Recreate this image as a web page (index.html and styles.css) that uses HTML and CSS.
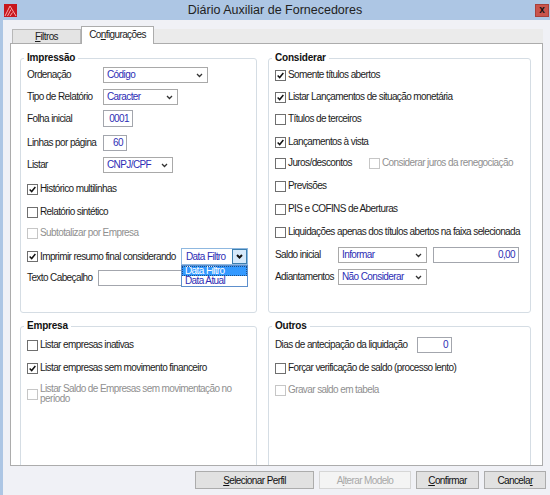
FILE: index.html
```html
<!DOCTYPE html>
<html lang="pt">
<head>
    <meta charset="utf-8">
    <title>Diário Auxiliar de Fornecedores</title>
    <link rel="stylesheet" href="styles.css">
</head>
<body>
<div class="window">
    <div class="titlebar">
        <svg class="app-icon" width="13" height="13" viewBox="0 0 13 13">
            <rect width="13" height="13" fill="#c8161d"/>
            <path d="M1 12 6 2 12 12M3.5 12 7 5.5M6 12 8.5 8.5" stroke="#f7a8a8" stroke-width="1" fill="none"/>
        </svg>
        <span class="title">Diário Auxiliar de Fornecedores</span>
        <span class="close">x</span>
    </div>

    <div class="client">
        <div class="tabs">
            <div class="tab"><u>F</u>iltros</div>
            <div class="tab active">Co<u>n</u>figurações</div>
        </div>

        <div class="page">
            <!-- Impressão -->
            <fieldset class="group">
                <legend>Impressão</legend>
                <div class="row">
                    <span class="lbl">Ordenação</span>
                    <div class="combo w105">Código<svg class="chev" viewBox="0 0 7 5"><path d="M1 1l2.5 2.5L6 1"/></svg></div>
                </div>
                <div class="row mt6">
                    <span class="lbl">Tipo de Relatório</span>
                    <div class="combo w75">Caracter<svg class="chev" viewBox="0 0 7 5"><path d="M1 1l2.5 2.5L6 1"/></svg></div>
                </div>
                <div class="row mt5 tall">
                    <span class="lbl">Folha inicial</span>
                    <span class="field w30">0001</span>
                </div>
                <div class="row mt8">
                    <span class="lbl">Linhas por página</span>
                    <span class="field w24">60</span>
                </div>
                <div class="row mt6">
                    <span class="lbl">Listar</span>
                    <div class="combo w70">CNPJ/CPF<svg class="chev" viewBox="0 0 7 5"><path d="M1 1l2.5 2.5L6 1"/></svg></div>
                </div>
                <div class="row mt8"><span class="cb"><svg viewBox="0 0 11 11"><path d="M2 5.5 4.5 8 9 2.5"/></svg></span>Histórico multilinhas</div>
                <div class="row mt7"><span class="cb"></span>Relatório sintético</div>
                <div class="row mt5 off"><span class="cb"></span>Subtotalizar por Empresa</div>
                <div class="row mt7 tall">
                    <span class="cb"><svg viewBox="0 0 11 11"><path d="M2 5.5 4.5 8 9 2.5"/></svg></span>Imprimir resumo final considerando
                    <div class="combo focus push">
                        <span class="combo-text">Data Filtro</span>
                        <span class="drop-btn"><svg class="chev bold" viewBox="0 0 7 5"><path d="M1 1l2.5 2.5L6 1"/></svg></span>
                        <div class="droplist">
                            <div class="item sel">Data Filtro</div>
                            <div class="item">Data Atual</div>
                        </div>
                    </div>
                </div>
                <div class="row mt5">
                    <span>Texto Cabeçalho</span>
                    <span class="field w150 push"></span>
                </div>
            </fieldset>

            <!-- Considerar -->
            <fieldset class="group">
                <legend>Considerar</legend>
                <div class="row"><span class="cb"><svg viewBox="0 0 11 11"><path d="M2 5.5 4.5 8 9 2.5"/></svg></span>Somente títulos abertos</div>
                <div class="row mt6"><span class="cb"><svg viewBox="0 0 11 11"><path d="M2 5.5 4.5 8 9 2.5"/></svg></span>Listar Lançamentos de situação monetária</div>
                <div class="row mt6"><span class="cb"></span>Títulos de terceiros</div>
                <div class="row mt7"><span class="cb"><svg viewBox="0 0 11 11"><path d="M2 5.5 4.5 8 9 2.5"/></svg></span>Lançamentos à vista</div>
                <div class="row mt5">
                    <span class="opt w94"><span class="cb"></span>Juros/descontos</span>
                    <span class="opt off"><span class="cb"></span>Considerar juros da renegociação</span>
                </div>
                <div class="row mt7"><span class="cb"></span>Previsões</div>
                <div class="row mt7"><span class="cb"></span>PIS e COFINS de Aberturas</div>
                <div class="row mt7"><span class="cb"></span>Liquidações apenas dos títulos abertos na faixa selecionada</div>
                <div class="row mt7">
                    <span class="lbl w63">Saldo inicial</span>
                    <div class="combo w89">Informar<svg class="chev" viewBox="0 0 7 5"><path d="M1 1l2.5 2.5L6 1"/></svg></div>
                    <span class="field w86 ml6">0,00</span>
                </div>
                <div class="row mt6">
                    <span class="lbl w63">Adiantamentos</span>
                    <div class="combo w89">Não Considerar<svg class="chev" viewBox="0 0 7 5"><path d="M1 1l2.5 2.5L6 1"/></svg></div>
                </div>
            </fieldset>

            <!-- Empresa -->
            <fieldset class="group lower">
                <legend>Empresa</legend>
                <div class="row"><span class="cb"></span>Listar empresas inativas</div>
                <div class="row mt7"><span class="cb"><svg viewBox="0 0 11 11"><path d="M2 5.5 4.5 8 9 2.5"/></svg></span>Listar empresas sem movimento financeiro</div>
                <div class="row two mt8 off"><span class="cb"></span><span class="wrap">Listar Saldo de Empresas sem movimentação no período</span></div>
            </fieldset>

            <!-- Outros -->
            <fieldset class="group lower">
                <legend>Outros</legend>
                <div class="row">
                    <span class="lbl w142">Dias de antecipação da liquidação</span>
                    <span class="field w35">0</span>
                </div>
                <div class="row mt7"><span class="cb"></span>Forçar verificação de saldo (processo lento)</div>
                <div class="row mt6 off"><span class="cb"></span>Gravar saldo em tabela</div>
            </fieldset>
        </div>

        <div class="buttons">
            <button class="btn w119"><u>S</u>elecionar Perfil</button>
            <button class="btn w92" disabled>A<u>l</u>terar Modelo</button>
            <button class="btn w63"><u>C</u>onfirmar</button>
            <button class="btn w62">Cancela<u>r</u></button>
        </div>
    </div>
</div>
</body>
</html>
```

FILE: styles.css
```css
/* Janela no estilo Windows 8 */
* {
    box-sizing: border-box;
}

body {
    margin: 0;
    background-color: #f0f1f6;
    font-family: "Liberation Sans", Arial, sans-serif;
    font-size: 10px;
    letter-spacing: -0.6px;
    line-height: 12px;
    color: #1c1c1c;
}

.window {
    width: 550px;
    height: 495px;
    display: flex;
    flex-direction: column;
    overflow: hidden;
}

.titlebar {
    height: 20px;
    flex-shrink: 0;
    background-color: #adc6e4;
    display: grid;
    grid-template-columns: 1fr auto 1fr;
    align-items: center;
}

.app-icon {
    justify-self: start;
    margin-left: 4px;
}

.title {
    font-size: 12.5px;
    letter-spacing: 0;
    color: #222;
}

.close {
    justify-self: end;
    width: 14px;
    height: 13px;
    margin-right: 1px;
    background-color: #c9534c;
    border: 1px solid #a8403a;
    color: #111;
    font-weight: bold;
    font-size: 10px;
    line-height: 10px;
    text-align: center;
    letter-spacing: 0;
}

.client {
    flex: 1;
    border-left: 3px solid #adc6e4;
    padding: 0 4px 0 7px;
}

/* Abas */
.tabs {
    display: flex;
    align-items: flex-end;
    height: 17px;
    margin: 6px 3px 0 2px;
    background: linear-gradient(transparent 3px, #ebebeb 3px);
}

.tab {
    width: 69px;
    height: 14px;
    border: 1px solid #b8b8b8;
    border-bottom: 0;
    background-color: #e4e4e4;
    text-align: center;
    line-height: 13px;
}

.tab.active {
    position: relative;
    z-index: 1;
    width: 73px;
    height: 18px;
    margin-bottom: -1px;
    border-color: #acacac;
    background-color: #fff;
    line-height: 15px;
}

.page {
    width: 533px;
    height: 423px;
    border: 1px solid #acacac;
    background-color: #fff;
    overflow: hidden;
    padding: 8px 11px 0 9px;
    display: grid;
    grid-template-columns: 237px 263px;
    grid-template-rows: 261px 220px;
    gap: 7px 11px;
}

/* Caixas de grupo */
.group {
    margin: 0;
    min-width: 0;
    padding: 3px 8px 0 6px;
    border: 1px solid #d5dde4;
    border-radius: 3px;
}

.group.lower {
    padding-top: 5px;
}

.group legend {
    padding: 0 3px;
    margin-left: -3px;
    font-weight: bold;
    line-height: 12px;
    letter-spacing: -0.2px;
    color: #111;
}

.row {
    display: flex;
    align-items: center;
    height: 16px;
    white-space: nowrap;
}

.row.tall {
    height: 17px;
}

.row.two {
    height: auto;
    line-height: 10px;
}

.wrap {
    white-space: normal;
    width: 200px;
}

.mt5 { margin-top: 5px; }
.mt6 { margin-top: 6px; }
.mt7 { margin-top: 7px; }
.mt8 { margin-top: 8px; }
.ml6 { margin-left: 6px; }
.push { margin-left: auto; }

.lbl {
    width: 76px;
    flex-shrink: 0;
}

.w63 { width: 63px; }
.w142 { width: 142px; }

.opt {
    display: flex;
    align-items: center;
}

.opt.w94 { width: 94px; }

.off {
    color: #909090;
}

/* Caixa de seleção */
.cb {
    width: 11px;
    height: 11px;
    flex-shrink: 0;
    margin-right: 2px;
    border: 1px solid #6f6f6f;
    background-color: #fff;
}

.cb svg {
    display: block;
    width: 9px;
    height: 9px;
}

.cb svg path {
    fill: none;
    stroke: #111;
    stroke-width: 1.8;
}

.off .cb {
    border-color: #c6c6c6;
}

/* Combos e campos */
.combo {
    position: relative;
    display: flex;
    align-items: center;
    justify-content: space-between;
    height: 16px;
    padding: 0 4px 0 3px;
    border: 1px solid #a9a9a9;
    background-color: #fff;
    color: #2d2db5;
}

.chev {
    width: 7px;
    height: 5px;
}

.chev path {
    fill: none;
    stroke: #333;
    stroke-width: 1.3;
}

.chev.bold path {
    stroke: #111;
    stroke-width: 2;
}

.w105 { width: 105px; }
.w75 { width: 75px; }
.w70 { width: 70px; }
.w89 { width: 89px; }

.combo.focus {
    width: 67px;
    height: 17px;
    padding: 0;
    border-color: #8fb8e0;
}

.combo-text {
    padding-left: 4px;
}

.drop-btn {
    width: 15px;
    height: 15px;
    display: flex;
    align-items: center;
    justify-content: center;
    border: 1px solid #3c7fb1;
    background-color: #d6e9fb;
}

.droplist {
    position: absolute;
    top: calc(100% + 1px);
    left: -1px;
    right: -1px;
    border: 1px solid #5d8fcc;
    background-color: #fff;
    line-height: 10px;
    z-index: 2;
}

.item {
    height: 10px;
    padding-left: 3px;
    color: #2d2db5;
}

.item.sel {
    background-color: #3399ff;
    color: #fff;
    outline: 1px dotted #1c4f8a;
    outline-offset: -1px;
}

.field {
    height: 16px;
    padding-right: 3px;
    border: 1px solid #a3a6ad;
    background-color: #fff;
    color: #2d2db5;
    text-align: right;
    line-height: 14px;
}

.tall .field {
    height: 17px;
    line-height: 15px;
}

.w30 { width: 30px; }
.w24 { width: 24px; }
.w150 { width: 150px; }
.w86 { width: 86px; }
.w35 { width: 35px; }

/* Botões do rodapé */
.buttons {
    display: flex;
    justify-content: flex-end;
    gap: 5px;
    margin-top: 5px;
}

.btn {
    height: 18px;
    padding: 0;
    border: 1px solid #acacac;
    background-color: #e1e1e1;
    font-family: inherit;
    font-size: 10px;
    letter-spacing: -0.6px;
    color: #111;
}

.btn:disabled {
    border-color: #d6d6d6;
    background-color: #f4f4f4;
    color: #a8a8a8;
}

.w119 { width: 119px; }
.w92 { width: 92px; }
.w63.btn { width: 63px; }
.w62 { width: 62px; }
```
